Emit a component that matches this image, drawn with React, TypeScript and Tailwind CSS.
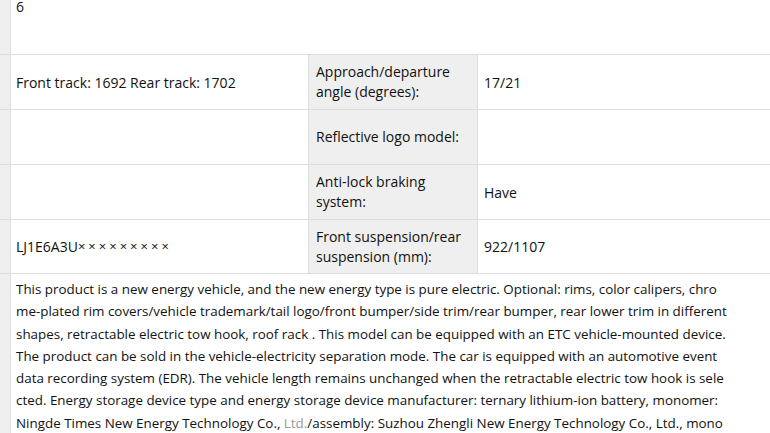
const rows = [
  { value: "Front track: 1692 Rear track: 1702", label: ["Approach/departure", "angle (degrees):"], right: "17/21" },
  { value: "", label: ["Reflective logo model:"], right: "" },
  { value: "", label: ["Anti-lock braking", "system:"], right: "Have" },
  { value: "LJ1E6A3U", label: ["Front suspension/rear", "suspension (mm):"], right: "922/1107", masked: "×××××××××" },
];

const lines = [
  "This product is a new energy vehicle, and the new energy type is pure electric. Optional: rims, color calipers, chro",
  "me-plated rim covers/vehicle trademark/tail logo/front bumper/side trim/rear bumper, rear lower trim in different",
  "shapes, retractable electric tow hook, roof rack . This model can be equipped with an ETC vehicle-mounted device.",
  "The product can be sold in the vehicle-electricity separation mode. The car is equipped with an automotive event",
  "data recording system (EDR). The vehicle length remains unchanged when the retractable electric tow hook is sele",
  "cted. Energy storage device type and energy storage device manufacturer: ternary lithium-ion battery, monomer:",
];

export default function App() {
  return (
    <div
      className="w-[770px] h-[433px] overflow-hidden bg-white text-[#111111] text-[14px]"
      style={{ fontFamily: '"Open Sans", "Noto Sans", sans-serif' }}
    >
      <div className="grid grid-cols-[10px_297px_168px_1fr] grid-rows-[54px_54px_54px_54px_53px_160px] gap-px bg-[#dedede]">
        {/* top row, only the tail of the previous cell is visible */}
        <div className="bg-[#efefef]" />
        <div className="col-span-3 bg-white pl-[5px] leading-[14px]">6</div>

        {rows.map((r, i) => (
          <div key={i} className="contents">
            <div className="bg-[#efefef]" />
            <div className="bg-white flex items-center pl-[5px]">
              {r.value}
              {r.masked && <span className="tracking-[3px] text-[13px]">{r.masked}</span>}
            </div>
            <div className="bg-[#efefef] flex flex-col justify-center pl-[7px] leading-5">
              {r.label.map((l) => (
                <span key={l}>{l}</span>
              ))}
            </div>
            <div className="bg-white flex items-center pl-[6px]">{r.right}</div>
          </div>
        ))}

        <div className="bg-[#efefef]" />
        <div className="col-span-3 bg-white pl-[5px] pt-1 text-[13.4px] leading-[22.3px] whitespace-nowrap">
          {lines.map((l) => (
            <div key={l}>{l}</div>
          ))}
          <div>
            Ningde Times New Energy Technology Co., <span className="text-[#9a9a9a]">Ltd.</span>/assembly: Suzhou Zhengli New Energy Technology Co., Ltd., mono
          </div>
        </div>
      </div>
    </div>
  );
}
